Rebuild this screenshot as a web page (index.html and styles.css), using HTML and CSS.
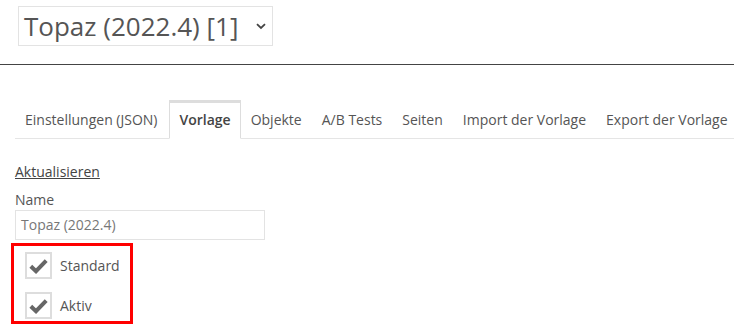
FILE: index.html
```html
<!DOCTYPE html>
<html lang="de">
<head>
    <meta charset="UTF-8">
    <meta name="viewport" content="width=device-width, initial-scale=1.0">
    <title>Vorlage</title>
    <link rel="stylesheet" href="styles.css">
</head>
<body>
    <div class="header">
        <div class="theme-select">
            <span class="theme-name">Topaz (2022.4) [1]</span>
            <svg class="chevron" width="10" height="7" viewBox="0 0 10 7"><path d="M1 1.2 L5 5 L9 1.2" fill="none" stroke="#444" stroke-width="1.8"/></svg>
        </div>
    </div>
    <hr class="divider">

    <ul class="nav-tabs">
        <li><a href="#">Einstellungen (JSON)</a></li>
        <li class="active"><a href="#">Vorlage</a></li>
        <li><a href="#">Objekte</a></li>
        <li><a href="#">A/B Tests</a></li>
        <li><a href="#">Seiten</a></li>
        <li><a href="#">Import der Vorlage</a></li>
        <li><a href="#">Export der Vorlage</a></li>
    </ul>

    <div class="tab-content">
        <a class="update-link" href="#">Aktualisieren</a>
        <label class="field-label">Name</label>
        <div class="text-input">Topaz (2022.4)</div>
        <div class="checks">
            <div class="check-row">
                <span class="check-box"><svg width="19" height="16" viewBox="0 0 19 16"><path d="M1.8 8.2 L7 13.2 L17.2 2.6" fill="none" stroke="#666" stroke-width="4"/></svg></span>
                <span class="check-label">Standard</span>
            </div>
            <div class="check-row">
                <span class="check-box"><svg width="19" height="16" viewBox="0 0 19 16"><path d="M1.8 8.2 L7 13.2 L17.2 2.6" fill="none" stroke="#666" stroke-width="4"/></svg></span>
                <span class="check-label">Aktiv</span>
            </div>
        </div>
    </div>
</body>
</html>
```

FILE: styles.css
```css
body {
    font-family: "Open Sans", Arial, sans-serif;
    font-size: 14px;
    color: #555;
    margin: 0;
    background-color: #fff;
    overflow: hidden;
}

.header {
    padding: 6px 0 0 18px;
    height: 58px;
}

.theme-select {
    display: flex;
    align-items: center;
    justify-content: space-between;
    width: 248px;
    height: 38px;
    border: 1px solid #e3e3e3;
    padding: 0 0 0 5px;
}

.theme-name {
    font-size: 26px;
    color: #555;
    line-height: 38px;
}

.chevron {
    margin-right: 6px;
}

.divider {
    border: none;
    border-top: 1px solid #444;
    margin: 0;
}

.nav-tabs {
    list-style: none;
    display: flex;
    margin: 35px 0 0 15px;
    padding: 0;
    border-bottom: 1px solid #e5e5e5;
    white-space: nowrap;
}

.nav-tabs li {
    flex-shrink: 0;
    margin-bottom: -1px;
}

.nav-tabs li.active {
    margin-left: 2px;
}

.nav-tabs a {
    display: block;
    padding: 7px 9px 8px;
    line-height: 20px;
    color: #555;
    text-decoration: none;
    border: 1px solid transparent;
    border-top-width: 3px;
}

.nav-tabs .active a {
    font-weight: 600;
    color: #444;
    border-color: #ddd;
    border-bottom-color: #fff;
}

.tab-content {
    padding: 23px 0 0 15px;
}

.update-link {
    display: block;
    color: #444;
    text-decoration: underline;
    line-height: 20px;
}

.field-label {
    display: block;
    margin-top: 8px;
    line-height: 20px;
}

.text-input {
    width: 243px;
    height: 28px;
    line-height: 28px;
    border: 1px solid #e3e3e3;
    padding-left: 5px;
    color: #777;
}

.checks {
    display: inline-block;
    border: 3px solid #f00;
    margin: 3px 0 0 -4px;
    padding: 6px 10px 2px 11px;
}

.check-row {
    display: flex;
    align-items: center;
    height: 27px;
    margin-bottom: 13px;
}

.check-row:last-child {
    margin-bottom: 0;
}

.check-box {
    display: flex;
    align-items: center;
    justify-content: center;
    width: 23px;
    height: 23px;
    border: 2px solid #ddd;
    margin-right: 8px;
}

.check-label {
    color: #555;
}
```
